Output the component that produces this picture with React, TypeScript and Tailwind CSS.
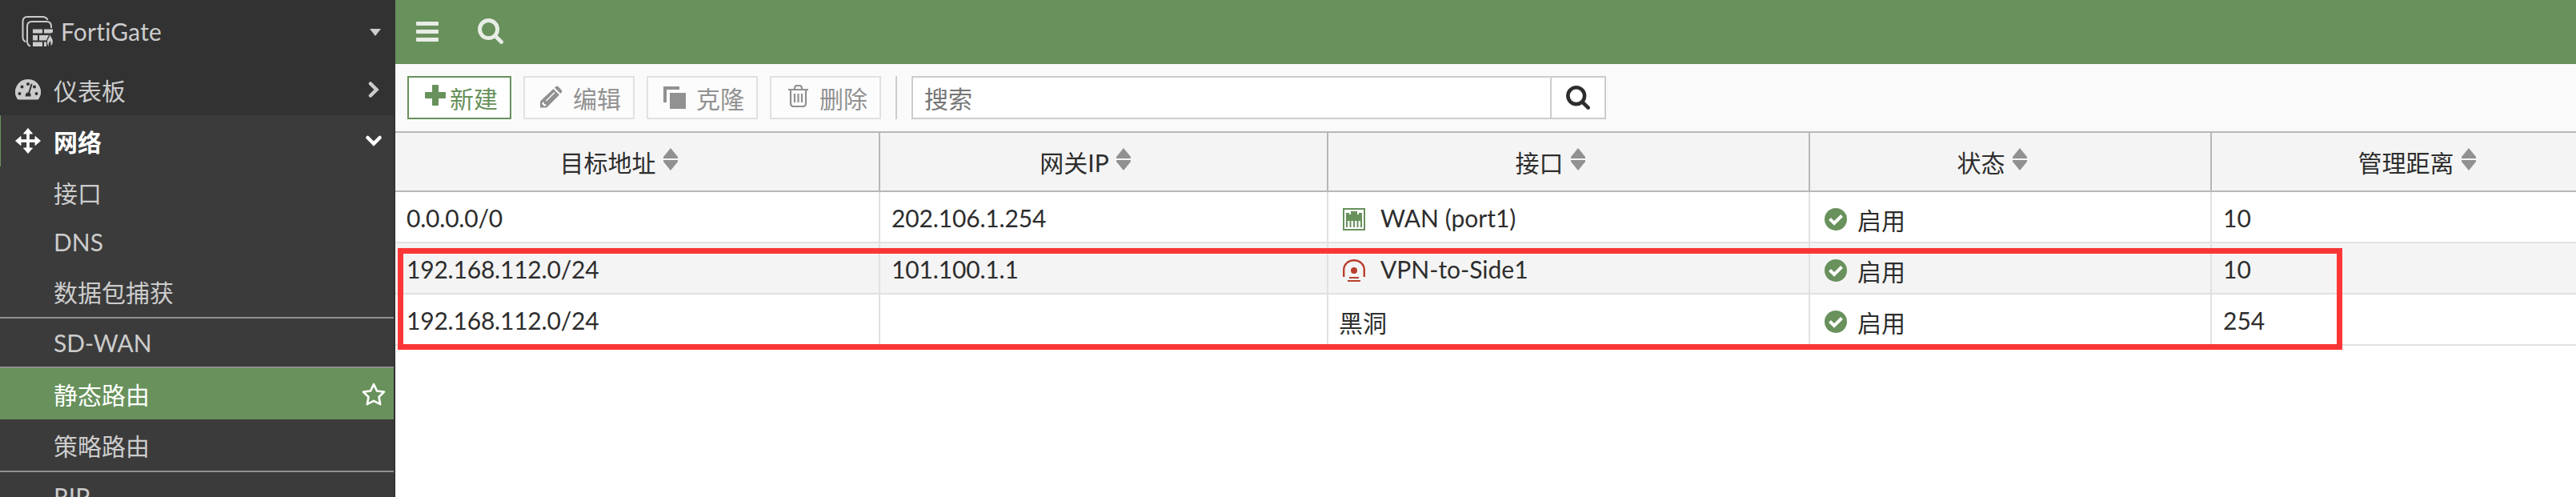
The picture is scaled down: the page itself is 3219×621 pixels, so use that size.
import { ReactNode } from "react";

const SEARCH =
  "M1216 832q0-185-131.5-316.5t-316.5-131.5-316.5 131.5-131.5 316.5 131.5 316.5 316.5 131.5 316.5-131.5 131.5-316.5zm512 832q0 52-38 90t-90 38q-54 0-90-38l-343-342q-179 124-399 124-143 0-273.5-55.5t-225-150-150-225-55.5-273.5 55.5-273.5 150-225 225-150 273.5-55.5 273.5 55.5 225 150 150 225 55.5 273.5q0 220-124 399l343 343q37 37 37 90z";

function SearchIcon({ className }: { className: string }) {
  return (
    <svg viewBox="64 128 1664 1664" className={className} fill="currentColor">
      <path d={SEARCH} />
    </svg>
  );
}

function FortiGateIcon() {
  return (
    <svg viewBox="0 0 40 40" className="h-10 w-10" fill="none" stroke="currentColor" strokeWidth="2">
      <path d="M5.500 32C2.500 31.500 1.500 29 1.500 26V7Q1.500 1 7.500 1H26Q31 1 32.500 5" />
      <path d="M11 37.500C8 37 7 35 7 31V13Q7 7 13 7H31Q37 7 37 13V15" />
      <g fill="currentColor" stroke="none">
        <path d="M14 16.500h12v5H14zM28 16.500h11v4l-3 1h-8zM14 24h6v6.500h-6zM22 24h12l-2 4-1 2.500h-9zM14 32.500h12V38H14zM28 32.500h3V38h-3z" />
        <path d="M35.500 22c.5 4-3.500 6-3.500 11 0 2 .5 4 2 5-.8-3 0-5 2-7 0 2 1 3 .5 6.500 2-2 3-5 2-8-1-3-3-4-3-7.500z" />
      </g>
    </svg>
  );
}

function GaugeIcon() {
  return (
    <svg viewBox="0 0 32 26" className="h-[26px] w-8" fill="currentColor">
      <path
        fillRule="evenodd"
        d="M16 0A16 16 0 0 0 2.500 24.600Q3 25.500 4 25.500H28Q29 25.500 29.500 24.600A16 16 0 0 0 16 0zM5.500 16a2 2 0 1 1 0 4 2 2 0 0 1 0-4zM8.500 7.500a2 2 0 1 1 0 4 2 2 0 0 1 0-4zM16 4a2 2 0 1 1 0 4 2 2 0 0 1 0-4zM24 7.500a2 2 0 1 1 0 4 2 2 0 0 1 0-4zM26.500 16a2 2 0 1 1 0 4 2 2 0 0 1 0-4zM21.600 6.200L18.300 16.800A3.400 3.400 0 0 1 19.500 20V21.500H12.800V20A3.400 3.400 0 0 1 16.300 16.400L19.800 5.600z"
      />
    </svg>
  );
}

function MoveIcon() {
  return (
    <svg viewBox="0 0 32 32" className="h-8 w-8" fill="currentColor" stroke="currentColor" strokeWidth="1" strokeLinejoin="round">
      <path d="M16 .5L21.500 7H17.300V14.700H25V10.500L31.500 16L25 21.500V17.300H17.300V25H21.500L16 31.500L10.500 25H14.700V17.300H7V21.500L.5 16L7 10.500V14.700H14.700V7H10.500z" />
    </svg>
  );
}

function Sort() {
  return (
    <svg viewBox="0 0 18 28" className="mt-[-8px] ml-[9px] h-7 w-[18px] shrink-0 text-[#919191]" fill="currentColor">
      <path d="M9 0L18 11V13H0V11zM0 15H18V17L9 28L0 17z" />
    </svg>
  );
}

function PortIcon() {
  return (
    <svg viewBox="0 0 28 28" className="h-7 w-7 text-[#68915c]" fill="currentColor">
      <path d="M1 1H27V27H1z" fill="none" stroke="currentColor" strokeWidth="2" />
      <path d="M4 6h4v2h2V4h8v4h2V6h4v18h-2v-8h-2.500v8h-2v-8H15v8h-2v-8h-2.500v8h-2v-8H6v8H4z" />
    </svg>
  );
}

function TunnelIcon() {
  return (
    <svg viewBox="0 0 28 28" className="h-7 w-7 text-[#b8402c]" fill="none" stroke="currentColor" strokeWidth="2.400">
      <path d="M1.200 22V13A12.800 11.800 0 0 1 26.800 13V22" />
      <circle cx="14" cy="14" r="4" fill="currentColor" stroke="none" />
      <path d="M8 23H20M6 27H22" strokeWidth="2" />
    </svg>
  );
}

function CheckIcon() {
  return (
    <svg viewBox="0 0 28 28" className="h-7 w-7 shrink-0">
      <circle cx="14" cy="14" r="14" fill="#68915c" />
      <path d="M6.500 13.500L12 19L21.500 9.500" fill="none" stroke="#fff" strokeWidth="4" />
    </svg>
  );
}

function NavItem({ label, latin, active, line }: { label: string; latin?: boolean; active?: boolean; line?: boolean }) {
  return (
    <>
      <div
        className={`flex shrink-0 items-center justify-between pr-[10px] pl-[67px] ${latin ? "h-[60px]" : "h-16"} ${
          active ? "bg-[#68915c] text-white" : "text-[#cccccc]"
        }`}
      >
        <span className={latin ? "" : "pt-[2px]"}>{label}</span>
        {active && (
          <svg viewBox="0 0 30 29" className="h-[29px] w-[30px]" fill="none" stroke="currentColor" strokeWidth="2.600" strokeLinejoin="round">
            <path d="M15 2L19 10.500L28 11.600L21.500 18L23.200 27.200L15 22.800L6.800 27.200L8.500 18L2 11.600L11 10.500z" />
          </svg>
        )}
      </div>
      {line && <div className="h-0.5 shrink-0 bg-[#919191]" />}
    </>
  );
}

function Button({ children, label, primary }: { children: ReactNode; label: string; primary?: boolean }) {
  return (
    <button
      className={`flex h-[54px] items-center border-2 ${
        primary ? "w-[130px] border-[#68915c] bg-white pl-5 text-[#68915c]" : "w-[139px] border-[#e1e1e1] bg-[#fcfcfc] pl-[19px] text-[#919191]"
      }`}
    >
      {children}
      <span className="pt-[2px]">{label}</span>
    </button>
  );
}

const COLS = "grid grid-cols-[606px_560px_602px_502px_560px]";

const ROWS = [
  { dst: "0.0.0.0/0", gw: "202.106.1.254", kind: "port", name: "WAN (port1)", dist: "10" },
  { dst: "192.168.112.0/24", gw: "101.100.1.1", kind: "tunnel", name: "VPN-to-Side1", dist: "10" },
  { dst: "192.168.112.0/24", gw: "", kind: "none", name: "黑洞", dist: "254" },
];

export default function App() {
  return (
    <div className="relative flex h-[621px] w-[3219px] overflow-hidden bg-white font-['Lato','Noto_Sans_CJK_SC',sans-serif] text-[30px] leading-[40px] text-[#2d2d2d]">
      <aside className="flex h-[621px] w-[494px] shrink-0 flex-col overflow-hidden bg-[#323232] text-[#cccccc]">
        <div className="flex h-20 shrink-0 items-center pr-[18px] pl-[27px]">
          <FortiGateIcon />
          <span className="ml-[9px] grow pb-[2px] tracking-[0.2px]">FortiGate</span>
          <svg viewBox="0 0 14 9" className="h-[9px] w-[14px]" fill="currentColor">
            <path d="M0 0H14L7 9z" />
          </svg>
        </div>
        <div className="flex h-16 shrink-0 items-center pr-5 pl-[19px]">
          <GaugeIcon />
          <span className="ml-4 grow pt-[2px]">仪表板</span>
          <svg viewBox="0 0 14 20" className="h-5 w-[14px]" fill="none" stroke="currentColor" strokeWidth="4.500" strokeLinecap="round">
            <path d="M3 2.500L10.500 10L3 17.500" />
          </svg>
        </div>
        <div className="mr-0.5 flex grow flex-col bg-[#3b3b3b]">
          <div className="flex h-16 shrink-0 items-center border-l border-[#68915c] pr-[15px] pl-[18px] font-bold text-white">
            <MoveIcon />
            <span className="ml-4 grow pt-[2px]">网络</span>
            <svg viewBox="0 0 20 14" className="h-[14px] w-5" fill="none" stroke="currentColor" strokeWidth="4.500" strokeLinecap="round">
              <path d="M2.500 3L10 10.500L17.500 3" />
            </svg>
          </div>
          <NavItem label="接口" />
          <NavItem label="DNS" latin />
          <NavItem label="数据包捕获" line />
          <NavItem label="SD-WAN" latin line />
          <NavItem label="静态路由" active />
          <NavItem label="策略路由" line />
          <NavItem label="RIP" latin />
        </div>
      </aside>

      <main className="flex min-w-0 grow flex-col">
        <header className="flex h-20 shrink-0 items-center bg-[#68915c] pb-[2px] pl-[26px] text-[#e8ede6]">
          <div className="flex w-7 flex-col gap-[5px]">
            <div className="h-[5px] rounded-[1px] bg-current" />
            <div className="h-[5px] rounded-[1px] bg-current" />
            <div className="h-[5px] rounded-[1px] bg-current" />
          </div>
          <SearchIcon className="ml-[49px] h-8 w-8" />
        </header>

        <div className="flex h-[84px] shrink-0 items-center gap-[15px] bg-[#fafafa] pl-[15px]">
          <Button primary label="新建">
            <svg viewBox="0 0 26 26" className="mt-[-6px] mr-[5px] h-[26px] w-[26px]" fill="currentColor">
              <path d="M10 0H16Q17 0 17 1V9H25Q26 9 26 10V16Q26 17 25 17H17V25Q17 26 16 26H10Q9 26 9 25V17H1Q0 17 0 16V10Q0 9 1 9H9V1Q9 0 10 0z" />
            </svg>
          </Button>
          <Button label="编辑">
            <svg viewBox="0 0 28 28" className="mt-[-3px] mr-[13px] h-7 w-7" fill="currentColor">
              <path
                fillRule="evenodd"
                d="M0 27.500V19.500L16.500 4L24 11.500L8 27.500zM2.500 21V23L5 25.500H7L7.500 23.500L5 23L4.500 20.500zM7 18.500L8 19.500L18.500 9L17.500 8z"
              />
              <path d="M18 2.500L19.500 1.200Q21 0 22.500 1.200L26.700 5.400Q28 7 26.700 8.500L25.300 10z" />
            </svg>
          </Button>
          <Button label="克隆">
            <svg viewBox="0 0 28 28" className="mr-[13px] h-7 w-7" fill="currentColor">
              <path d="M0 0H20V4H4V20H0zM8 8H28V28H8z" />
            </svg>
          </Button>
          <Button label="删除">
            <svg viewBox="0 0 26 28" className="mt-[-4px] mr-[13px] ml-[2px] h-7 w-[26px]" fill="none" stroke="currentColor" strokeWidth="2.200">
              <path d="M0 6H25M7.500 6L8.500 2.500Q9 1 10.500 1H14.500Q16 1 16.500 2.500L17.500 6M3 6V23Q3 27 7 27H18Q22 27 22 23V6M8 11V22M12.500 11V22M17 11V22" />
            </svg>
          </Button>
          <div className="ml-[3px] h-[54px] w-0.5 bg-[#cccccc]" />
          <div className="ml-[3px] flex h-[54px] w-[868px] border-2 border-[#cccccc] bg-white">
            <div className="grow border-r-2 border-[#cccccc] pl-[14px] leading-[52px] text-[#757575]">搜索</div>
            <div className="flex w-[66px] items-center justify-center">
              <SearchIcon className="h-[30px] w-[30px]" />
            </div>
          </div>
        </div>

        <div className={`${COLS} h-[76px] shrink-0 border-y-2 border-[#b7b7b7] bg-[#f4f4f4]`}>
          {["目标地址", "网关IP", "接口", "状态", "管理距离"].map((t) => (
            <div key={t} className="flex items-center justify-center border-r-2 border-[#b7b7b7] pt-[2px] pr-[46px]">
              {t}
              <Sort />
            </div>
          ))}
        </div>

        {ROWS.map((r, i) => (
          <div key={i} className={`${COLS} h-16 shrink-0 border-b-2 border-[#e1e1e1] ${i === 1 ? "bg-[#f4f4f4]" : "bg-white"}`}>
            <div className="flex items-center border-r-2 border-[#e1e1e1] pt-[2px] pl-[14px] tracking-[-0.2px]">{r.dst}</div>
            <div className="flex items-center border-r-2 border-[#e1e1e1] pt-[2px] pl-[14px] tracking-[-0.15px]">{r.gw}</div>
            <div className={`flex items-center border-r-2 border-[#e1e1e1] ${r.kind === "none" ? "pt-[8px] pl-[13px]" : "pt-[2px] pl-[14px]"}`}>
              {r.kind !== "none" && (
                <span className="mt-[4px] mr-[19px] ml-[4px]">{r.kind === "port" ? <PortIcon /> : <TunnelIcon />}</span>
              )}
              {r.name}
            </div>
            <div className="flex items-center border-r-2 border-[#e1e1e1] pt-[6px] pl-[18px]">
              <CheckIcon />
              <span className="ml-[13px] pt-[2px]">启用</span>
            </div>
            <div className="flex items-center pt-[2px] pl-[14px]">{r.dist}</div>
          </div>
        ))}
      </main>

      <div className="absolute top-[310px] left-[497px] h-[127px] w-[2430px] border-[7px] border-[#fc3636]" />
    </div>
  );
}
